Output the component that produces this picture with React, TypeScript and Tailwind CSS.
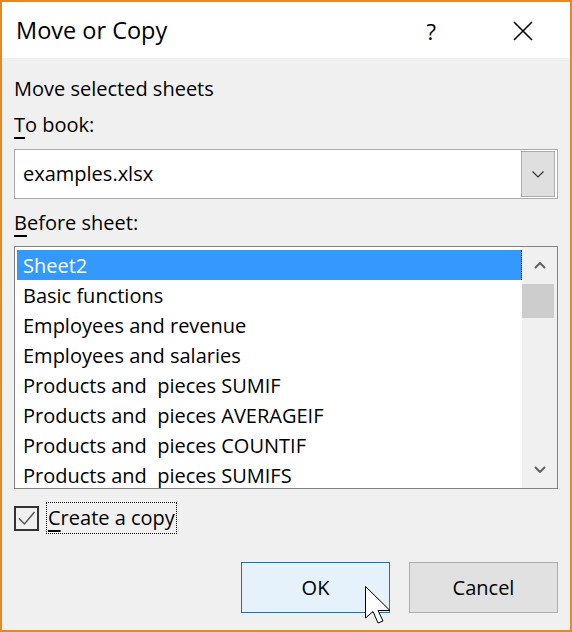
const sheets = [
  "Sheet2",
  "Basic functions",
  "Employees and revenue",
  "Employees and salaries",
  "Products and\u00a0 pieces SUMIF",
  "Products and\u00a0 pieces AVERAGEIF",
  "Products and\u00a0 pieces COUNTIF",
  "Products and\u00a0 pieces SUMIFS",
];

function Chevron({ up, className }: { up?: boolean; className?: string }) {
  return (
    <svg width="12" height="7" viewBox="0 0 12 7" className={className}>
      <path
        d={up ? "M1 6 L6 1 L11 6" : "M1 1 L6 6 L11 1"}
        fill="none"
        stroke="currentColor"
        strokeWidth="2"
      />
    </svg>
  );
}

export default function App() {
  return (
    <div className="relative flex h-[632px] w-[572px] flex-col border-2 border-[#e8891d] bg-[#f0f0f0] font-['Open_Sans',sans-serif] text-black">
      {/* title bar */}
      <div className="flex h-[56px] items-center bg-white pl-[14px] pr-[37px] pt-[2px]">
        <span className="text-[23.5px] leading-none">Move or Copy</span>
        <span className="ml-auto mr-[77px] text-[22px] leading-none">?</span>
        <svg width="20" height="20" viewBox="0 0 20 20">
          <path d="M1 1 L19 19 M19 1 L1 19" stroke="#000" strokeWidth="1.6" />
        </svg>
      </div>

      <div className="flex flex-1 flex-col px-3 pt-[17px] text-[20px] leading-[28px]">
        <div>Move selected sheets</div>
        <div className="mt-2">
          <span className="underline decoration-2 underline-offset-[5px]">T</span>o book:
        </div>

        {/* to book combobox */}
        <div className="mt-[10px] flex h-[50px] items-center border border-[#acacac] bg-white pl-[8px] pr-[2px]">
          <span>examples.xlsx</span>
          <div className="ml-auto flex h-[46px] w-[34px] items-center justify-center border border-[#acacac] bg-[#dfdfdf] text-[#333]">
            <svg width="12" height="7" viewBox="0 0 12 7">
              <path d="M0.5 0.5 L6 6 L11.5 0.5" fill="none" stroke="currentColor" strokeWidth="1.2" />
            </svg>
          </div>
        </div>

        <div className="mt-[10px]">
          <span className="underline decoration-2 underline-offset-[5px]">B</span>efore sheet:
        </div>

        {/* before sheet listbox */}
        <div className="mt-[9px] flex h-[243px] border border-[#828282] bg-white">
          <div className="flex-1 overflow-hidden pl-[2px] pt-[3px]">
            {sheets.map((s, i) => (
              <div
                key={s}
                className={
                  i === 0
                    ? "h-[30px] whitespace-pre border-r border-dotted border-black bg-[#3399ff] pl-[6px] leading-[31px] text-white"
                    : "h-[30px] whitespace-pre pl-[6px] leading-[31px]"
                }
              >
                {s}
              </div>
            ))}
          </div>
          <div className="flex w-[35px] flex-col bg-[#f0f0f0] text-[#606060]">
            <div className="flex h-[37px] items-center justify-center">
              <Chevron up />
            </div>
            <div className="h-[34px] w-[32px] bg-[#cdcdcd]" />
            <div className="mt-auto flex h-[37px] items-center justify-center">
              <Chevron />
            </div>
          </div>
        </div>

        {/* create a copy */}
        <div className="mt-[13px] flex items-center">
          <div className="flex h-[25px] w-[25px] items-center justify-center border-2 border-[#333]">
            <svg width="21" height="21" viewBox="0 0 21 21">
              <path d="M3 10.5 L8.5 16 L18.5 4" fill="none" stroke="#555" strokeWidth="1.5" />
            </svg>
          </div>
          <div className="ml-[7px] flex h-[32px] items-center border border-dotted border-black px-[1px]">
            <span className="underline decoration-2 underline-offset-[5px]">C</span>reate a copy
          </div>
        </div>

        {/* buttons */}
        <div className="mt-auto mb-[17px] flex justify-end gap-[19px]">
          <button className="relative h-[51px] w-[149px] border border-[#0078d7] bg-[#e5f1fb]">
            OK
            <svg
              className="absolute left-[123px] top-[23px]"
              width="27"
              height="39"
              viewBox="0 0 27 39"
            >
              <path
                d="M0.5 0.5 L0.5 32 L8 25.5 L13 37 L18 35 L13 24.5 L25 24.5 Z"
                fill="#fff"
                stroke="#000"
                strokeWidth="1"
              />
            </svg>
          </button>
          <button className="h-[51px] w-[149px] border border-[#adadad] bg-[#e1e1e1]">
            Cancel
          </button>
        </div>
      </div>
    </div>
  );
}
